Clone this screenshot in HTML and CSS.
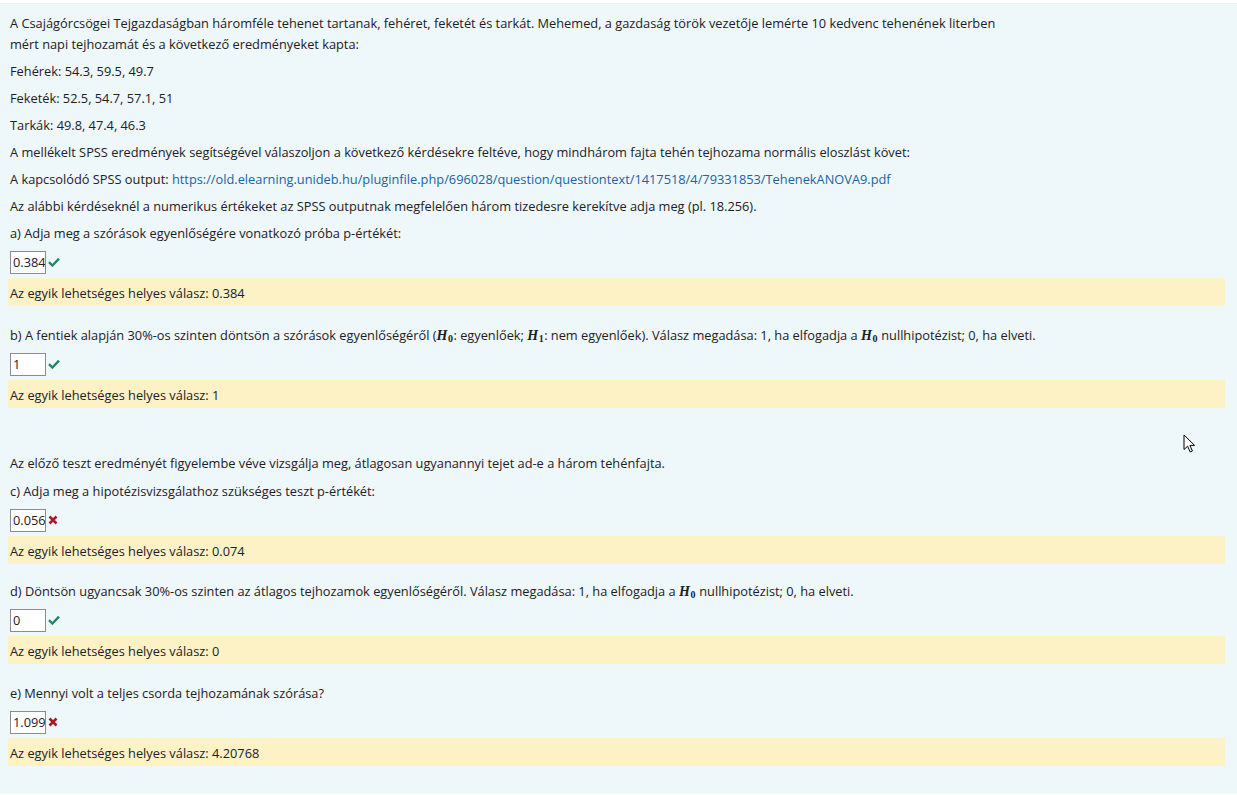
FILE: index.html
```html
<!DOCTYPE html>
<html lang="hu">
<head>
<meta charset="utf-8">
<title>Kérdés</title>
<link rel="stylesheet" href="styles.css">
</head>
<body>
<div class="formulation">
  <p>A Csajágórcsögei Tejgazdaságban háromféle tehenet tartanak, fehéret, feketét és tarkát. Mehemed, a gazdaság török vezetője lemérte 10 kedvenc tehenének literben<br>mért napi tejhozamát és a következő eredményeket kapta:</p>
  <p>Fehérek: 54.3, 59.5, 49.7</p>
  <p>Feketék: 52.5, 54.7, 57.1, 51</p>
  <p>Tarkák: 49.8, 47.4, 46.3</p>
  <p>A mellékelt SPSS eredmények segítségével válaszoljon a következő kérdésekre feltéve, hogy mindhárom fajta tehén tejhozama normális eloszlást követ:</p>
  <p>A kapcsolódó SPSS output: <a href="#">https://old.elearning.unideb.hu/pluginfile.php/696028/question/questiontext/1417518/4/79331853/TehenekANOVA9.pdf</a></p>
  <p>Az alábbi kérdéseknél a numerikus értékeket az SPSS outputnak megfelelően három tizedesre kerekítve adja meg (pl. 18.256).</p>

  <div class="q">
    <p>a) Adja meg a szórások egyenlőségére vonatkozó próba p-értékét:</p>
    <div class="answer"><input class="num" type="text" value="0.384" readonly><span class="mark ok"><svg viewBox="0 0 12 10" width="12" height="10"><path d="M1 5.2 L4.4 8.5 L11 1.6" fill="none" stroke="currentColor" stroke-width="2.4"/></svg></span></div>
    <div class="outcome">Az egyik lehetséges helyes válasz: 0.384</div>
  </div>

  <div class="q">
    <p>b) A fentiek alapján 30%-os szinten döntsön a szórások egyenlőségéről (<span class="m">H<sub>0</sub></span>: egyenlőek; <span class="m">H<sub>1</sub></span>: nem egyenlőek). Válasz megadása: 1, ha elfogadja a <span class="m">H<sub>0</sub></span> nullhipotézist; 0, ha elveti.</p>
    <div class="answer"><input class="num" type="text" value="1" readonly><span class="mark ok"><svg viewBox="0 0 12 10" width="12" height="10"><path d="M1 5.2 L4.4 8.5 L11 1.6" fill="none" stroke="currentColor" stroke-width="2.4"/></svg></span></div>
    <div class="outcome">Az egyik lehetséges helyes válasz: 1</div>
  </div>

  <div class="q gap">
    <p>Az előző teszt eredményét figyelembe véve vizsgálja meg, átlagosan ugyanannyi tejet ad-e a három tehénfajta.</p>
    <p>c) Adja meg a hipotézisvizsgálathoz szükséges teszt p-értékét:</p>
    <div class="answer"><input class="num" type="text" value="0.056" readonly><span class="mark bad"><svg viewBox="0 0 10 10" width="10" height="10"><path d="M1.5 1.5 L8.5 8.5 M8.5 1.5 L1.5 8.5" fill="none" stroke="currentColor" stroke-width="2.6"/></svg></span></div>
    <div class="outcome">Az egyik lehetséges helyes válasz: 0.074</div>
  </div>

  <div class="q">
    <p>d) Döntsön ugyancsak 30%-os szinten az átlagos tejhozamok egyenlőségéről. Válasz megadása: 1, ha elfogadja a <span class="m">H<sub>0</sub></span> nullhipotézist; 0, ha elveti.</p>
    <div class="answer"><input class="num" type="text" value="0" readonly><span class="mark ok"><svg viewBox="0 0 12 10" width="12" height="10"><path d="M1 5.2 L4.4 8.5 L11 1.6" fill="none" stroke="currentColor" stroke-width="2.4"/></svg></span></div>
    <div class="outcome">Az egyik lehetséges helyes válasz: 0</div>
  </div>

  <div class="q last">
    <p>e) Mennyi volt a teljes csorda tejhozamának szórása?</p>
    <div class="answer"><input class="num" type="text" value="1.099" readonly><span class="mark bad"><svg viewBox="0 0 10 10" width="10" height="10"><path d="M1.5 1.5 L8.5 8.5 M8.5 1.5 L1.5 8.5" fill="none" stroke="currentColor" stroke-width="2.6"/></svg></span></div>
    <div class="outcome">Az egyik lehetséges helyes válasz: 4.20768</div>
  </div>
</div>
<svg class="cursor" viewBox="0 0 13 20" width="13" height="20"><path d="M1 1 L1 15.5 L4.6 12.2 L7.2 18 L9.4 17 L6.9 11.4 L11.6 11.4 Z" fill="#fff" stroke="#000" stroke-width="1" stroke-linejoin="round"/></svg>
</body>
</html>
```
FILE: styles.css
```css
html, body {
  margin: 0;
  padding: 0;
}
body {
  background: #ffffff;
  font-family: "Open Sans", "Noto Sans", sans-serif;
  font-size: 12.8px;
  color: #1d2125;
  padding-top: 3px;
  position: relative;
}
.formulation {
  background: #eef7fa;
  border-top: 1px solid #e6f1f4;
  padding: 9px 12px 28px 8px;
}
p {
  margin: 0 0 6px 2px;
  line-height: 21px;
}
a {
  color: #1c63a5;
  text-decoration: none;
}
.m {
  font-family: "Liberation Serif", "DejaVu Serif", serif;
  font-style: italic;
  font-weight: bold;
  font-size: 14px;
  line-height: 1;
  letter-spacing: 0.5px;
}
.m sub {
  font-style: normal;
  font-size: 10px;
  vertical-align: baseline;
  position: relative;
  top: 2px;
  line-height: 0;
}
.q {
  margin-bottom: 19px;
}
.q.last {
  margin-bottom: 0;
}
.q.gap {
  margin-top: 45px;
  margin-bottom: 17px;
}
.q.gap p:first-child {
  margin-bottom: 7px;
}
.answer {
  display: flex;
  align-items: center;
  height: 24px;
  margin-left: 2px;
  margin-bottom: 4px;
}
.num {
  box-sizing: border-box;
  width: 36px;
  height: 23px;
  border: 1px solid #8a8d90;
  border-radius: 0;
  background: #fff;
  font-family: inherit;
  font-size: 12.8px;
  color: #1d2125;
  padding: 0 0 0 2px;
  margin: 0;
  outline: none;
}
.mark {
  display: inline-flex;
  margin-left: 2px;
}
.mark.ok { color: #1f8a6a; }
.mark.bad { color: #b0172b; }
.outcome {
  background: #fdf1c6;
  height: 28px;
  line-height: 30px;
  padding-left: 2px;
}
.cursor {
  position: absolute;
  left: 1183px;
  top: 434px;
}
```
